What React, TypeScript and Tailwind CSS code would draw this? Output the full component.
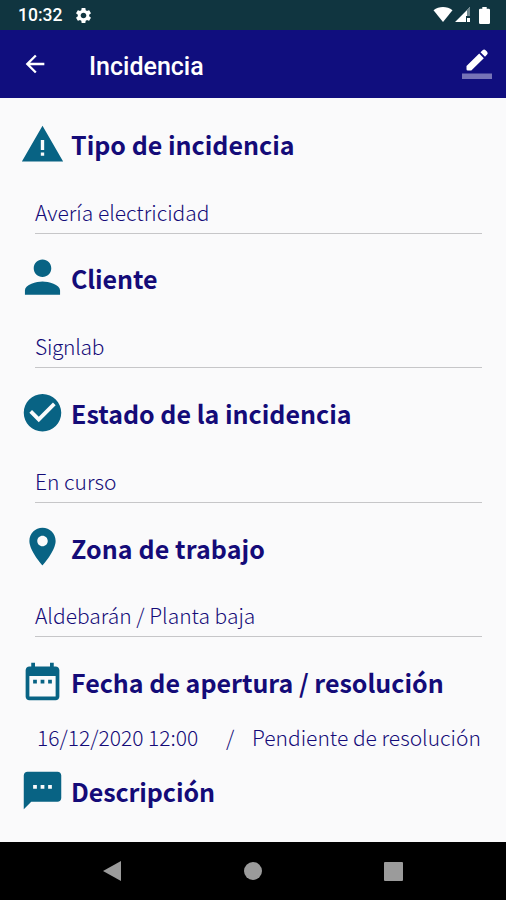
import type { ReactNode } from "react";

const WARNING = "M1 21h22L12 2 1 21zm11.9-3h-1.8v-1.8h1.8v1.800zm0-3.100h-1.800v-5.300h1.800v5.300z";
const PERSON =
  "M12 12c2.21 0 4-1.79 4-4s-1.79-4-4-4-4 1.79-4 4 1.79 4 4 4zm0 2c-2.67 0-8 1.34-8 4v2h16v-2c0-2.66-5.33-4-8-4z";
const CHECK =
  "M12 2C6.48 2 2 6.48 2 12s4.48 10 10 10 10-4.48 10-10S17.52 2 12 2zm-2 15l-5-5 1.41-1.41L10 14.17l7.59-7.59L19 8l-9 9z";
const PLACE =
  "M12 2C8.13 2 5 5.13 5 9c0 5.25 7 13 7 13s7-7.75 7-13c0-3.87-3.13-7-7-7zm0 9.8c-1.55 0-2.8-1.25-2.8-2.8s1.25-2.8 2.8-2.8 2.8 1.25 2.8 2.8-1.25 2.8-2.8 2.8z";
const DATE =
  "M9 11H7v2h2v-2zm4 0h-2v2h2v-2zm4 0h-2v2h2v-2zm2-7h-1V2h-2v2H8V2H6v2H5c-1.11 0-1.99.9-1.99 2L3 20c0 1.1.89 2 2 2h14c1.1 0 2-.9 2-2V6c0-1.1-.9-2-2-2zm0 16H5V9h14v11z";
const SMS =
  "M20 2H4c-1.1 0-1.99.9-1.99 2L2 22l4-4h14c1.1 0 2-.9 2-2V4c0-1.1-.9-2-2-2zM9 11H7V9h2v2zm4 0h-2V9h2v2zm4 0h-2V9h2v2z";
const SETTINGS =
  "M19.14 12.94c.04-.3.06-.61.06-.94 0-.32-.02-.64-.07-.94l2.03-1.58c.18-.14.23-.41.12-.61l-1.92-3.32c-.12-.22-.37-.29-.59-.22l-2.39.96c-.5-.38-1.03-.7-1.62-.94l-.36-2.54c-.04-.24-.24-.41-.48-.41h-3.84c-.24 0-.43.17-.47.41l-.36 2.54c-.59.24-1.13.57-1.62.94l-2.39-.96c-.22-.08-.47 0-.59.22L2.74 8.87c-.12.21-.08.47.12.61l2.03 1.58c-.05.3-.09.63-.09.94s.02.64.07.94l-2.03 1.58c-.18.14-.23.41-.12.61l1.92 3.32c.12.22.37.29.59.22l2.39-.96c.5.38 1.03.7 1.62.94l.36 2.54c.05.24.24.41.48.41h3.84c.24 0 .44-.17.47-.41l.36-2.54c.59-.24 1.13-.56 1.62-.94l2.39.96c.22.08.47 0 .59-.22l1.92-3.32c.12-.22.07-.47-.12-.61l-2.01-1.58zM12 15.6c-1.98 0-3.6-1.62-3.6-3.6s1.62-3.6 3.6-3.6 3.6 1.62 3.6 3.6-1.62 3.6-3.6 3.6z";

type HeadingProps = {
  icon: string;
  viewBox?: string;
  className?: string;
  children: ReactNode;
};

function Heading({ icon, viewBox = "0 0 24 24", className = "pt-px", children }: HeadingProps) {
  return (
    <div className="flex h-[45px] items-center pl-5">
      <svg viewBox={viewBox} className="size-[45px] shrink-0 fill-[#086384]">
        <path d={icon} />
      </svg>
      <h2 className={`ml-1.5 text-[25px] leading-none font-bold whitespace-nowrap ${className}`}>{children}</h2>
    </div>
  );
}

function Field({ className = "", children }: { className?: string; children: ReactNode }) {
  return (
    <div className="mr-6 ml-[35px] flex h-[67px] items-end border-b-[1.5px] border-[#c6c6c8] pb-2.5">
      <span className={`text-[21px] leading-none font-light whitespace-nowrap ${className}`}>{children}</span>
    </div>
  );
}

function StatusBar() {
  return (
    <div className="flex h-[30px] items-center bg-[#103540] pr-4 pl-[18px] text-white">
      <span className="pt-0.5 font-[Roboto] text-[17.5px] leading-none font-medium">10:32</span>
      <svg viewBox="0 0 24 24" className="ml-3 size-[19px] fill-white">
        <path d={SETTINGS} />
      </svg>
      <div className="ml-auto flex items-center">
        <svg viewBox="0 0 20 16" className="h-4 w-5 fill-white">
          <path d="M0.5 3.2C6 -1 14 -1 19.5 3.2L10 15z" />
        </svg>
        <svg viewBox="0 0 16 16" className="ml-0.5 size-4">
          <path d="M15 0v9h-4v6H0z" fill="#fff" />
          <path d="M12 3l3-3v9h-3z" fill="#6f878e" />
          <path d="M12 11h3v4h-3z" fill="#fff" />
        </svg>
        <svg viewBox="0 0 11 17" className="ml-2 h-[17px] w-[11px] fill-white">
          <path d="M3.3 0h4.4v1.8h2q1.3 0 1.3 1.3v12.6q0 1.3-1.3 1.3H1.3Q0 17 0 15.7V3.1q0-1.3 1.3-1.3h2z" />
        </svg>
      </div>
    </div>
  );
}

function AppBar() {
  return (
    <header className="flex h-[68px] items-center bg-[#100e7e] pr-3.5 pl-[21px] text-white">
      <svg viewBox="0 0 24 24" className="size-7 fill-white">
        <path d="M20 11H7.83l5.59-5.59L12 4l-8 8 8 8 1.41-1.41L7.83 13H20v-2z" />
      </svg>
      <h1 className="ml-10 pt-1 font-[Roboto] text-[25px] leading-none font-medium">Incidencia</h1>
      <svg viewBox="0 0 30 32" className="ml-auto h-8 w-[30px]">
        <path
          d="M4.5 18L17.2 5.600l4.600 4.600L9.300 22.600H5.800Q4.500 22.600 4.500 21.300zM18.500 4.300l2.100-2.100q1.500-1.300 3 0l1.500 1.500q1.300 1.400 0 2.900l-2.100 2.100z"
          fill="#fff"
        />
        <path d="M0 25.500h30V31H0z" fill="#7673b7" />
      </svg>
    </header>
  );
}

function NavBar() {
  return (
    <nav className="flex h-[58px] items-center justify-between bg-black px-[103px]">
      <svg viewBox="0 0 18 20" className="h-5 w-[18px] fill-[#9b9b9b]">
        <path d="M18 0v20L0 10z" />
      </svg>
      <span className="size-[18px] rounded-full bg-[#9b9b9b]" />
      <span className="size-[19px] rounded-[1px] bg-[#9b9b9b]" />
    </nav>
  );
}

export default function App() {
  return (
    <div className="flex h-[900px] w-[506px] flex-col overflow-hidden bg-[#fafafb] font-['Noto_Sans_CJK_SC','Noto_Sans',sans-serif] text-[#140b78]">
      <StatusBar />
      <AppBar />
      <main className="flex-1 pt-[23.8px]">
        <section className="h-[134.4px]">
          <Heading icon={WARNING}>Tipo de incidencia</Heading>
          <Field>Avería electricidad</Field>
        </section>
        <section className="h-[134.4px]">
          <Heading icon={PERSON} viewBox="1.75 2.4 20.5 20.5" className="tracking-[-0.1px]">
            Cliente
          </Heading>
          <Field className="tracking-[-0.3px]">Signlab</Field>
        </section>
        <section className="h-[134.4px]">
          <Heading icon={CHECK} viewBox="0 0.4 24 24">Estado de la incidencia</Heading>
          <Field>En curso</Field>
        </section>
        <section className="h-[134.4px]">
          <Heading icon={PLACE} viewBox="0 0.5 24 24" className="pt-0.5 tracking-[0.1px]">
            Zona de trabajo
          </Heading>
          <Field>Aldebarán / Planta baja</Field>
        </section>
        <section className="h-[108.6px]">
          <Heading icon={DATE} className="pt-0.5">Fecha de apertura / resolución</Heading>
          <div className="mt-[23px] flex pl-[37px] text-[21px] leading-none font-light whitespace-nowrap">
            <span className="w-[189px]">16/12/2020 12:00</span>
            <span className="w-[26px]">/</span>
            <span>Pendiente de resolución</span>
          </div>
        </section>
        <section>
          <Heading icon={SMS} className="pt-0.5 tracking-[-0.1px]">Descripción</Heading>
        </section>
      </main>
      <NavBar />
    </div>
  );
}
